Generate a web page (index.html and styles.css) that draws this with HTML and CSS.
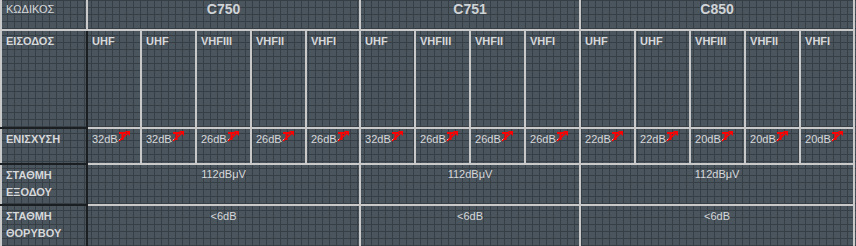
FILE: index.html
```html
<!DOCTYPE html>
<html lang="el">
<head>
<meta charset="utf-8">
<title>Ενισχυτές</title>
<link rel="stylesheet" href="styles.css">
</head>
<body>
<table class="spec">
  <colgroup>
    <col class="w-label">
    <col class="w54"><col class="w55"><col class="w55"><col class="w55"><col class="w54">
    <col class="w55"><col class="w55"><col class="w55"><col class="w55">
    <col class="w55"><col class="w55"><col class="w55"><col class="w55"><col class="w54">
  </colgroup>
  <tr class="r-head">
    <td class="label plain">ΚΩΔΙΚΟΣ</td>
    <td class="model" colspan="5">C750</td>
    <td class="model" colspan="4">C751</td>
    <td class="model" colspan="5">C850</td>
  </tr>
  <tr class="r-input">
    <td class="label dark">ΕΙΣΟΔΟΣ</td>
    <td class="band">UHF</td><td class="band">UHF</td><td class="band">VHFIII</td><td class="band">VHFII</td><td class="band">VHFI</td>
    <td class="band">UHF</td><td class="band">VHFIII</td><td class="band">VHFII</td><td class="band">VHFI</td>
    <td class="band">UHF</td><td class="band">UHF</td><td class="band">VHFIII</td><td class="band">VHFII</td><td class="band">VHFI</td>
  </tr>
  <tr class="r-gain">
    <td class="label dark">ΕΝΙΣΧΥΣΗ</td>
    <td class="gain">32dB<svg class="ico" viewBox="0 0 13 11" width="13" height="11"><path d="M2 1h7v2H6.5v6h-2V3H2z" fill="#f00"/><path d="M2 10L11 2" stroke="#f00" stroke-width="1.6"/><path d="M8 0h5v5z" fill="#f00"/><path d="M0.5 10.5l3-3" stroke="#fff" stroke-width="1" stroke-dasharray="1 1"/></svg></td>
    <td class="gain">32dB<svg class="ico" viewBox="0 0 13 11" width="13" height="11"><path d="M2 1h7v2H6.5v6h-2V3H2z" fill="#f00"/><path d="M2 10L11 2" stroke="#f00" stroke-width="1.6"/><path d="M8 0h5v5z" fill="#f00"/><path d="M0.5 10.5l3-3" stroke="#fff" stroke-width="1" stroke-dasharray="1 1"/></svg></td>
    <td class="gain">26dB<svg class="ico" viewBox="0 0 13 11" width="13" height="11"><path d="M2 1h7v2H6.5v6h-2V3H2z" fill="#f00"/><path d="M2 10L11 2" stroke="#f00" stroke-width="1.6"/><path d="M8 0h5v5z" fill="#f00"/><path d="M0.5 10.5l3-3" stroke="#fff" stroke-width="1" stroke-dasharray="1 1"/></svg></td>
    <td class="gain">26dB<svg class="ico" viewBox="0 0 13 11" width="13" height="11"><path d="M2 1h7v2H6.5v6h-2V3H2z" fill="#f00"/><path d="M2 10L11 2" stroke="#f00" stroke-width="1.6"/><path d="M8 0h5v5z" fill="#f00"/><path d="M0.5 10.5l3-3" stroke="#fff" stroke-width="1" stroke-dasharray="1 1"/></svg></td>
    <td class="gain">26dB<svg class="ico" viewBox="0 0 13 11" width="13" height="11"><path d="M2 1h7v2H6.5v6h-2V3H2z" fill="#f00"/><path d="M2 10L11 2" stroke="#f00" stroke-width="1.6"/><path d="M8 0h5v5z" fill="#f00"/><path d="M0.5 10.5l3-3" stroke="#fff" stroke-width="1" stroke-dasharray="1 1"/></svg></td>
    <td class="gain">32dB<svg class="ico" viewBox="0 0 13 11" width="13" height="11"><path d="M2 1h7v2H6.5v6h-2V3H2z" fill="#f00"/><path d="M2 10L11 2" stroke="#f00" stroke-width="1.6"/><path d="M8 0h5v5z" fill="#f00"/><path d="M0.5 10.5l3-3" stroke="#fff" stroke-width="1" stroke-dasharray="1 1"/></svg></td>
    <td class="gain">26dB<svg class="ico" viewBox="0 0 13 11" width="13" height="11"><path d="M2 1h7v2H6.5v6h-2V3H2z" fill="#f00"/><path d="M2 10L11 2" stroke="#f00" stroke-width="1.6"/><path d="M8 0h5v5z" fill="#f00"/><path d="M0.5 10.5l3-3" stroke="#fff" stroke-width="1" stroke-dasharray="1 1"/></svg></td>
    <td class="gain">26dB<svg class="ico" viewBox="0 0 13 11" width="13" height="11"><path d="M2 1h7v2H6.5v6h-2V3H2z" fill="#f00"/><path d="M2 10L11 2" stroke="#f00" stroke-width="1.6"/><path d="M8 0h5v5z" fill="#f00"/><path d="M0.5 10.5l3-3" stroke="#fff" stroke-width="1" stroke-dasharray="1 1"/></svg></td>
    <td class="gain">26dB<svg class="ico" viewBox="0 0 13 11" width="13" height="11"><path d="M2 1h7v2H6.5v6h-2V3H2z" fill="#f00"/><path d="M2 10L11 2" stroke="#f00" stroke-width="1.6"/><path d="M8 0h5v5z" fill="#f00"/><path d="M0.5 10.5l3-3" stroke="#fff" stroke-width="1" stroke-dasharray="1 1"/></svg></td>
    <td class="gain">22dB<svg class="ico" viewBox="0 0 13 11" width="13" height="11"><path d="M2 1h7v2H6.5v6h-2V3H2z" fill="#f00"/><path d="M2 10L11 2" stroke="#f00" stroke-width="1.6"/><path d="M8 0h5v5z" fill="#f00"/><path d="M0.5 10.5l3-3" stroke="#fff" stroke-width="1" stroke-dasharray="1 1"/></svg></td>
    <td class="gain">22dB<svg class="ico" viewBox="0 0 13 11" width="13" height="11"><path d="M2 1h7v2H6.5v6h-2V3H2z" fill="#f00"/><path d="M2 10L11 2" stroke="#f00" stroke-width="1.6"/><path d="M8 0h5v5z" fill="#f00"/><path d="M0.5 10.5l3-3" stroke="#fff" stroke-width="1" stroke-dasharray="1 1"/></svg></td>
    <td class="gain">20dB<svg class="ico" viewBox="0 0 13 11" width="13" height="11"><path d="M2 1h7v2H6.5v6h-2V3H2z" fill="#f00"/><path d="M2 10L11 2" stroke="#f00" stroke-width="1.6"/><path d="M8 0h5v5z" fill="#f00"/><path d="M0.5 10.5l3-3" stroke="#fff" stroke-width="1" stroke-dasharray="1 1"/></svg></td>
    <td class="gain">20dB<svg class="ico" viewBox="0 0 13 11" width="13" height="11"><path d="M2 1h7v2H6.5v6h-2V3H2z" fill="#f00"/><path d="M2 10L11 2" stroke="#f00" stroke-width="1.6"/><path d="M8 0h5v5z" fill="#f00"/><path d="M0.5 10.5l3-3" stroke="#fff" stroke-width="1" stroke-dasharray="1 1"/></svg></td>
    <td class="gain">20dB<svg class="ico" viewBox="0 0 13 11" width="13" height="11"><path d="M2 1h7v2H6.5v6h-2V3H2z" fill="#f00"/><path d="M2 10L11 2" stroke="#f00" stroke-width="1.6"/><path d="M8 0h5v5z" fill="#f00"/><path d="M0.5 10.5l3-3" stroke="#fff" stroke-width="1" stroke-dasharray="1 1"/></svg></td>
  </tr>
  <tr class="r-out">
    <td class="label dark">ΣΤΑΘΜΗ<br>ΕΞΟΔΟΥ</td>
    <td class="val" colspan="5">112dBμV</td>
    <td class="val" colspan="4">112dBμV</td>
    <td class="val" colspan="5">112dBμV</td>
  </tr>
  <tr class="r-noise">
    <td class="label dark">ΣΤΑΘΜΗ<br>ΘΟΡΥΒΟΥ</td>
    <td class="val" colspan="5">&lt;6dB</td>
    <td class="val" colspan="4">&lt;6dB</td>
    <td class="val" colspan="5">&lt;6dB</td>
  </tr>
</table>
</body>
</html>
```

FILE: styles.css
```css
html, body {
  margin: 0;
  padding: 0;
}
body {
  width: 856px;
  height: 246px;
  overflow: hidden;
  background-color: #4b555e;
  background-image:
    linear-gradient(to right, #363e46 1px, transparent 1px),
    linear-gradient(to bottom, #363e46 1px, transparent 1px);
  background-size: 7px 7px;
  font-family: "Liberation Sans", Arial, sans-serif;
  font-size: 11px;
  color: #d6d8da;
}
.spec {
  border-collapse: collapse;
  table-layout: fixed;
  width: 855px;
}
.w-label { width: 86px; }
.w54 { width: 54px; }
.w55 { width: 55px; }
.spec td {
  border: 2px solid #c9c9c9;
  border-top: none;
  padding: 2px 4px 0;
  vertical-align: top;
  line-height: 17px;
  white-space: nowrap;
  overflow: hidden;
}
.spec tr:last-child td {
  border-bottom: none;
}
.r-head td { height: 28px; padding-top: 0; }
.r-input td { height: 94px; }
.r-gain td { height: 32px; }
.r-out td { height: 37px; }
.r-noise td { height: 42px; }
.label { font-weight: bold; }
.label.plain { font-weight: normal; padding-top: 1px; }
.label.dark { border-right-color: #1c1f22; border-bottom-color: #1c1f22; }
.spec tr:last-child .label.dark { border-bottom: none; }
.model {
  text-align: center;
  font-weight: bold;
  font-size: 14px;
  line-height: 17px;
  color: #d0d3d6;
}
.spec .model { padding-top: 1px; }
.band { font-weight: bold; padding-top: 3px; }
.gain { padding-top: 1px; }
.ico {
  vertical-align: top;
  margin-top: 0;
  margin-left: -1px;
}
.val { text-align: center; }
.r-out .val { padding-top: 1px; }
```
